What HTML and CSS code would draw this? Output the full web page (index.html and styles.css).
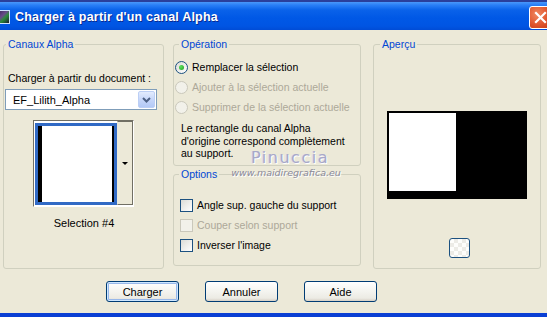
FILE: index.html
```html
<!DOCTYPE html>
<html lang="fr">
<head>
  <meta charset="UTF-8" />
  <title>Charger à partir d'un canal Alpha</title>
  <link rel="stylesheet" href="styles.css">
</head>
<body>

  <div class="window">

    <!-- Title bar -->
    <div class="titlebar">
      <span class="app-icon"></span>
      <span class="title">Charger à partir d'un canal Alpha</span>
      <span class="close-btn">
        <svg width="21" height="21" viewBox="0 0 21 21">
          <path d="M6 6 L15 15 M15 6 L6 15" stroke="#fff" stroke-width="2.2" stroke-linecap="square" />
        </svg>
      </span>
    </div>

    <div class="dialog">
      <div class="panels">

        <!-- Canaux Alpha -->
        <fieldset class="group group-canaux">
          <legend>Canaux Alpha</legend>
          <div class="field-label">Charger à partir du document :</div>
          <div class="combo">
            <span class="combo-text">EF_Lilith_Alpha</span>
            <span class="combo-btn">
              <svg width="9" height="6" viewBox="0 0 9 6">
                <path d="M1 1 L4.5 4.5 L8 1" fill="none" stroke="#4d6185" stroke-width="2" />
              </svg>
            </span>
          </div>
          <div class="swatch">
            <div class="swatch-preview"></div>
            <div class="swatch-drop"><span class="tri"></span></div>
          </div>
          <div class="swatch-name">Selection #4</div>
        </fieldset>

        <div class="middle">
          <!-- Opération -->
          <fieldset class="group group-operation">
            <legend>Opération</legend>
            <div class="radio-row"><span class="radio checked"></span>Remplacer la sélection</div>
            <div class="radio-row disabled"><span class="radio"></span>Ajouter à la sélection actuelle</div>
            <div class="radio-row disabled"><span class="radio"></span>Supprimer de la sélection actuelle</div>
            <p class="note">Le rectangle du canal Alpha d'origine correspond complètement au support.</p>
          </fieldset>

          <!-- Options -->
          <fieldset class="group group-options">
            <legend>Options</legend>
            <div class="check-row"><span class="check"></span>Angle sup. gauche du support</div>
            <div class="check-row disabled"><span class="check"></span>Couper selon support</div>
            <div class="check-row"><span class="check"></span>Inverser l'image</div>
          </fieldset>
        </div>

        <!-- Aperçu -->
        <fieldset class="group group-apercu">
          <legend>Aperçu</legend>
          <div class="preview">
            <div class="preview-white"></div>
          </div>
          <div class="bg-btn"></div>
        </fieldset>

      </div>

      <div class="buttons">
        <button class="btn default">Charger</button>
        <button class="btn">Annuler</button>
        <button class="btn">Aide</button>
      </div>
    </div>

    <!-- watermark -->
    <div class="watermark">
      <div class="wm-name">Pinuccia</div>
      <div class="wm-url">www.maidiregrafica.eu</div>
    </div>

  </div>

</body>
</html>
```

FILE: styles.css
```css
body {
  margin: 0;
  font-family: "Liberation Sans", Arial, sans-serif;
  font-size: 10.5px;
  color: #000;
  background: #ece9d8;
  overflow: hidden;
}
.window {
  position: relative;
  width: 547px;
  height: 317px;
  background: #ece9d8;
  box-sizing: border-box;
  border-bottom: 4px solid #0a3fd4;
  overflow: hidden;
}
.titlebar {
  height: 30px;
  display: flex;
  align-items: center;
  box-sizing: border-box;
  border-top: 2px solid #2a3f9c;
  background: linear-gradient(to bottom, #4a98fa 0, #2a7ff7 3px, #0a62ea 8px, #0058e6 16px, #0055e3 24px, #004cd6 28px);
  overflow: hidden;
}
.app-icon {
  width: 11px;
  height: 12px;
  margin-left: -3px;
  margin-top: 2px;
  background: linear-gradient(135deg, #3a2a5a 0, #6a4a8a 40%, #2b8a3a 60%, #1a1a2a 100%);
  border: 1px solid #cfe0fa;
}
.title {
  margin-left: 5px;
  margin-top: 1px;
  font-weight: bold;
  font-size: 12.5px;
  color: #fff;
  text-shadow: 1px 1px 0 #0a2a90;
  letter-spacing: 0.2px;
}
.close-btn {
  margin-left: auto;
  margin-right: -5px;
  margin-top: 3px;
  width: 21px;
  height: 21px;
  border: 1px solid #fff;
  border-radius: 3px;
  background: radial-gradient(circle at 35% 35%, #f08a62 0, #e0562e 55%, #c13a14 100%);
}
.dialog {
  padding-top: 7px;
}
.panels {
  display: flex;
  height: 232px;
}
.group {
  margin: 0;
  padding: 0;
  min-width: 0;
  box-sizing: border-box;
  border: 1px solid #d0d0bf;
  border-radius: 3px;
}
.group legend {
  padding: 0 2px;
  line-height: 14px;
  color: #0046d5;
}
.group-canaux {
  margin-left: 3px;
  width: 161px;
  height: 232px;
  padding-left: 1px;
}
.group-canaux legend {
  margin-left: 1px;
}
.field-label {
  margin-top: 21px;
  margin-left: 3px;
  line-height: 13px;
}
.combo {
  display: flex;
  align-items: center;
  margin-top: 4px;
  width: 152px;
  height: 21px;
  box-sizing: border-box;
  border: 1px solid #7f9db9;
  background: #fff;
}
.combo-text {
  flex: 1;
  padding-left: 7px;
  font-size: 11px;
}
.combo-btn {
  width: 17px;
  height: 17px;
  margin-right: 1px;
  box-sizing: border-box;
  border: 1px solid #bccff5;
  border-radius: 2px;
  background: linear-gradient(to bottom, #e3ecfe 0, #c7d7fa 50%, #b3c9f6 100%);
  display: flex;
  align-items: center;
  justify-content: center;
}
.swatch {
  display: flex;
  margin: 10px 0 0 28px;
  width: 101px;
  height: 87px;
  box-sizing: border-box;
  border: 1px solid;
  border-color: #716f64 #fff #fff #716f64;
  background: #fff;
}
.swatch-preview {
  width: 82px;
  margin: 2px 0 1px 1px;
  box-sizing: border-box;
  border: 3px solid #316ac5;
  background: #fff;
  box-shadow: inset 4px 0 0 #000, inset -2px 0 0 #000;
}
.swatch-drop {
  flex: 1;
  box-sizing: border-box;
  border: 1px solid;
  border-color: #716f64 #716f64 #716f64 #ece9d8;
  margin-bottom: 1px;
  background: #ece9d8;
  display: flex;
  align-items: center;
  justify-content: center;
}
.tri {
  width: 0;
  height: 0;
  border-left: 3px solid transparent;
  border-right: 3px solid transparent;
  border-top: 3px solid #000;
}
.swatch-name {
  margin-top: 10px;
  text-align: center;
  line-height: 13px;
  font-size: 11px;
}
.middle {
  display: flex;
  flex-direction: column;
  margin-left: 9px;
  width: 188px;
}
.group-operation {
  height: 129px;
}
.group-operation legend,
.group-options legend {
  margin-left: 5px;
}
.radio-row,
.check-row {
  display: flex;
  align-items: center;
  height: 20px;
  white-space: nowrap;
}
.group-operation .radio-row:first-of-type {
  margin-top: 6px;
}
.radio {
  width: 13px;
  height: 13px;
  margin: 0 4px 0 1px;
  box-sizing: border-box;
  border: 1px solid #1c5180;
  border-radius: 50%;
  background: linear-gradient(135deg, #dcdcd7 0, #fff 100%);
  display: flex;
  align-items: center;
  justify-content: center;
}
.radio.checked::after {
  content: "";
  width: 5px;
  height: 5px;
  border-radius: 50%;
  background: radial-gradient(circle at 35% 35%, #5de05d, #21a121);
}
.disabled {
  color: #aca899;
}
.disabled .radio,
.disabled .check {
  border-color: #cac8bb;
  background: #f2f1ea;
}
.note {
  margin: 5px 0 0 7px;
  line-height: 12.5px;
  width: 170px;
}
.group-options {
  margin-top: 1px;
  height: 99px;
}
.group-options .check-row:first-of-type {
  margin-top: 14px;
}
.check {
  width: 13px;
  height: 13px;
  margin: 0 4px 0 6px;
  box-sizing: border-box;
  border: 1px solid #1c5180;
  background: linear-gradient(135deg, #dcdcd7 0, #fff 100%);
}
.group-apercu {
  margin-left: 12px;
  width: 168px;
  height: 232px;
}
.group-apercu legend {
  margin-left: 6px;
}
.preview {
  margin: 60px 0 0 13px;
  width: 140px;
  height: 88px;
  box-sizing: border-box;
  padding: 2px 0 0 2px;
  background: #000;
}
.preview-white {
  width: 67px;
  height: 78px;
  background: #fff;
}
.bg-btn {
  margin: 39px 0 0 75px;
  width: 21px;
  height: 20px;
  box-sizing: border-box;
  border: 1px solid #1c5180;
  border-radius: 3px;
  background-color: #fdfdfb;
  background-image:
    linear-gradient(45deg, #ecebe6 25%, transparent 25%, transparent 75%, #ecebe6 75%),
    linear-gradient(45deg, #ecebe6 25%, transparent 25%, transparent 75%, #ecebe6 75%);
  background-size: 8px 8px;
  background-position: 0 0, 4px 4px;
}
.buttons {
  display: flex;
  gap: 26px;
  padding-left: 106px;
  margin-top: 12px;
}
.btn {
  width: 73px;
  height: 21px;
  padding: 0;
  font-family: "Liberation Sans", Arial, sans-serif;
  font-size: 11px;
  color: #000;
  border: 1px solid #003c74;
  border-radius: 3px;
  background: linear-gradient(to bottom, #fff 0, #f6f6f2 40%, #ecebe4 85%, #d6d0c5 100%);
}
.btn.default {
  box-shadow: inset 0 0 0 1px #cee7ff, inset 0 0 0 2px #98b8ea;
}
.watermark {
  position: absolute;
  left: 225px;
  top: 149px;
  width: 122px;
  text-align: center;
  pointer-events: none;
}
.wm-name {
  font-family: "DejaVu Sans", sans-serif;
  font-size: 16px;
  line-height: 18px;
  letter-spacing: 1.5px;
  color: #a8a8c8;
  text-shadow: 1px 1px 0 #fff, -1px 0 0 #d8d8e8;
  padding-left: 8px;
}
.wm-url {
  font-family: "DejaVu Sans", sans-serif;
  font-style: italic;
  font-size: 9.5px;
  line-height: 12px;
  color: #8a8a9a;
  text-shadow: 1px 1px 0 #fff;
}
```
